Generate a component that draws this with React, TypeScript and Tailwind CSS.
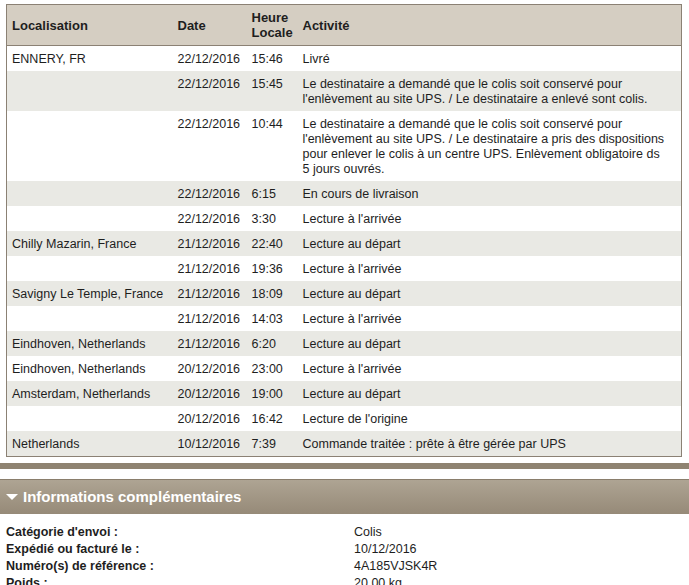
const ROWS: { loc: string; date: string; time: string; activity: string }[] = [
  { loc: "ENNERY, FR", date: "22/12/2016", time: "15:46", activity: "Livré" },
  {
    loc: "",
    date: "22/12/2016",
    time: "15:45",
    activity:
      "Le destinataire a demandé que le colis soit conservé pour l'enlèvement au site UPS. / Le destinataire a enlevé sont colis.",
  },
  {
    loc: "",
    date: "22/12/2016",
    time: "10:44",
    activity:
      "Le destinataire a demandé que le colis soit conservé pour l'enlèvement au site UPS. / Le destinataire a pris des dispositions pour enlever le colis à un centre UPS. Enlèvement obligatoire ds 5 jours ouvrés.",
  },
  { loc: "", date: "22/12/2016", time: "6:15", activity: "En cours de livraison" },
  { loc: "", date: "22/12/2016", time: "3:30", activity: "Lecture à l'arrivée" },
  { loc: "Chilly Mazarin, France", date: "21/12/2016", time: "22:40", activity: "Lecture au départ" },
  { loc: "", date: "21/12/2016", time: "19:36", activity: "Lecture à l'arrivée" },
  { loc: "Savigny Le Temple, France", date: "21/12/2016", time: "18:09", activity: "Lecture au départ" },
  { loc: "", date: "21/12/2016", time: "14:03", activity: "Lecture à l'arrivée" },
  { loc: "Eindhoven, Netherlands", date: "21/12/2016", time: "6:20", activity: "Lecture au départ" },
  { loc: "Eindhoven, Netherlands", date: "20/12/2016", time: "23:00", activity: "Lecture à l'arrivée" },
  { loc: "Amsterdam, Netherlands", date: "20/12/2016", time: "19:00", activity: "Lecture au départ" },
  { loc: "", date: "20/12/2016", time: "16:42", activity: "Lecture de l'origine" },
  {
    loc: "Netherlands",
    date: "10/12/2016",
    time: "7:39",
    activity: "Commande traitée : prête à être gérée par UPS",
  },
];

const DETAILS: [string, string][] = [
  ["Catégorie d'envoi :", "Colis"],
  ["Expédié ou facturé le :", "10/12/2016"],
  ["Numéro(s) de référence :", "4A185VJSK4R"],
  ["Poids :", "20,00 kg"],
];

export default function App() {
  return (
    <div className="min-h-screen bg-white text-[#1e1e1e] font-['Liberation_Sans',Arial,sans-serif] overflow-hidden">
      <div className="pt-[4px] pl-[6px]">
        <table className="w-[676px] table-fixed border-collapse border border-[#8b8174] text-[12.5px] leading-[15px]">
          <colgroup>
            <col className="w-[166px]" />
            <col className="w-[74px]" />
            <col className="w-[51px]" />
            <col />
          </colgroup>
          <thead>
            <tr className="bg-[#d5cec2] border-b border-[#8b8174] h-[41px]">
              <th className="text-left font-bold text-[13px] pl-[5px] align-middle">Localisation</th>
              <th className="text-left font-bold text-[13px] pl-[5px] align-middle">Date</th>
              <th className="text-left font-bold text-[13px] pl-[5px] align-middle leading-[15px]">
                Heure
                <br />
                Locale
              </th>
              <th className="text-left font-bold text-[13px] pl-[5px] align-middle">Activité</th>
            </tr>
          </thead>
          <tbody>
            {ROWS.map((r, i) => (
              <tr key={i} className={i % 2 === 1 ? "bg-[#e9e9e4]" : "bg-white"}>
                <td className="align-top pt-[6px] pb-[4px] pl-[5px]">{r.loc}</td>
                <td className="align-top pt-[6px] pb-[4px] pl-[5px]">{r.date}</td>
                <td className="align-top pt-[6px] pb-[4px] pl-[5px]">{r.time}</td>
                <td className="align-top pt-[6px] pb-[4px] pl-[5px] pr-[12px]">{r.activity}</td>
              </tr>
            ))}
          </tbody>
        </table>
      </div>

      <div className="mt-[6px] h-[6px] bg-[#8f8371]" />

      <div className="mt-[10px] h-[35px] border-t border-[#8a7e6c] bg-gradient-to-b from-[#aea493] to-[#968a78] flex items-center pl-[6px] gap-[5px]">
        <svg width="12" height="8" viewBox="0 0 12 8" className="shrink-0">
          <path d="M0 1 L12 1 L6 7 Z" fill="#ffffff" />
        </svg>
        <span className="text-white font-bold text-[15px]">Informations complémentaires</span>
      </div>

      <div className="pt-[10px] pl-[6px] text-[12.5px] leading-[17px]">
        {DETAILS.map(([label, value]) => (
          <div key={label} className="flex">
            <span className="w-[348px] font-bold shrink-0">{label}</span>
            <span>{value}</span>
          </div>
        ))}
      </div>
    </div>
  );
}
